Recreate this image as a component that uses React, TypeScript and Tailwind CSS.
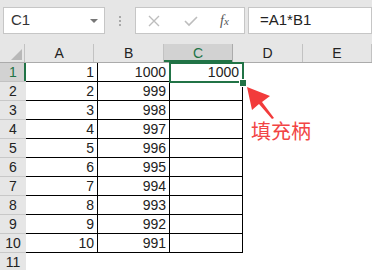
const rows = [
  [1, 1000],
  [2, 999],
  [3, 998],
  [4, 997],
  [5, 996],
  [6, 995],
  [7, 994],
  [8, 993],
  [9, 992],
  [10, 991],
]

const cols = ["A", "B", "C", "D", "E"]

const font = { fontFamily: '"Liberation Sans", Arial, sans-serif' }

const App = () => {
  return (
    <div className="relative w-[372px] h-[270px] overflow-hidden bg-white text-[14px] text-[#222]" style={font}>
      {/* Formula bar */}
      <div className="h-[44px] bg-[#e6e6e6] flex items-start pt-[7px] pl-[3px]">
        <div className="w-[102px] h-[27px] bg-white border border-[#c6c6c6] flex items-center justify-between pl-[7px] pr-[6px]">
          <span className="text-[15px] text-[#333]">C1</span>
          <span className="w-0 h-0 border-l-[4px] border-r-[4px] border-t-[4px] border-l-transparent border-r-transparent border-t-[#777]" />
        </div>
        <div className="w-[30px] h-[27px] flex flex-col items-center justify-center gap-[2px]">
          <span className="size-[2px] bg-[#a8a8a8]" />
          <span className="size-[2px] bg-[#a8a8a8]" />
          <span className="size-[2px] bg-[#a8a8a8]" />
        </div>
        <div className="w-[110px] h-[27px] bg-white border border-[#c6c6c6] flex items-center pl-[12px]">
          <svg width="12" height="12" viewBox="0 0 12 12" className="mr-[24px]">
            <path d="M1 1 L11 11 M11 1 L1 11" stroke="#bdbdbd" strokeWidth="1.4" fill="none" />
          </svg>
          <svg width="14" height="12" viewBox="0 0 14 12" className="mr-[22px]">
            <path d="M1 6 L5 10 L13 2" stroke="#bdbdbd" strokeWidth="1.6" fill="none" />
          </svg>
          <span className="italic text-[14px] text-[#555]" style={{ fontFamily: '"Liberation Serif", serif' }}>
            f<span className="text-[11px]">x</span>
          </span>
        </div>
        <div className="ml-[3px] flex-1 h-[27px] bg-white border border-[#c6c6c6] flex items-center pl-[11px]">
          <span className="text-[15px] text-[#222]">=A1*B1</span>
        </div>
      </div>

      {/* Column headers */}
      <div className="flex h-[19px] bg-[#e6e6e6] border-b border-[#ababab]">
        <div className="w-[26px] h-full relative border-r border-[#c2c2c2]">
          <span className="absolute right-[2px] bottom-[2px] w-0 h-0 border-l-[11px] border-b-[11px] border-l-transparent border-b-[#b8b8b8]" />
        </div>
        {cols.map((c) => (
          <div
            key={c}
            className={
              c === "C"
                ? "w-[72px] h-full flex items-center justify-center bg-[#d2d2d2] text-[#217346] border-r border-[#ababab] shadow-[inset_0_-2px_0_#217346]"
                : "w-[72px] h-full flex items-center justify-center border-r border-[#c2c2c2] text-[#222]"
            }
          >
            {c}
          </div>
        ))}
      </div>

      {/* Data rows */}
      {rows.map(([a, b], i) => (
        <div key={i} className="flex h-[19px]">
          <div
            className={
              i === 0
                ? "w-[26px] h-full flex items-center justify-center bg-[#d2d2d2] text-[#217346] shadow-[inset_-2px_0_0_#217346] border-b border-[#c2c2c2]"
                : "w-[26px] h-full flex items-center justify-center bg-[#e6e6e6] border-b border-[#c8c8c8]"
            }
          >
            {i + 1}
          </div>
          <div className="w-[72px] h-full flex items-center justify-end pr-[3px] border-r border-b border-black">{a}</div>
          <div className="w-[72px] h-full flex items-center justify-end pr-[3px] border-r border-b border-black">{b}</div>
          <div className="w-[73px] h-full flex items-center justify-end pr-[3px] border-r border-b border-black">
            {i === 0 ? 1000 : ""}
          </div>
        </div>
      ))}

      <div className="flex h-[19px]">
        <div className="w-[26px] h-full flex items-center justify-center bg-[#e6e6e6]">11</div>
      </div>

      {/* Active cell C1 with fill handle */}
      <div className="absolute left-[169px] top-[62px] w-[75px] h-[21px] border-2 border-[#217346]" />
      <div className="absolute left-[239px] top-[79px] w-[8px] h-[8px] bg-[#217346] border border-white" />

      {/* Callout arrow */}
      <svg className="absolute left-[240px] top-[80px]" width="50" height="45" viewBox="0 0 50 45">
        <path d="M7 7 L30 16 L22 22 L34 38 L32 39 L19 24 L12 30 Z" fill="#f23b3b" />
      </svg>
      <div
        className="absolute left-[251px] top-[121px] text-[20px] leading-none text-[#f24444]"
        style={{ fontFamily: '"Noto Sans CJK SC", sans-serif' }}
      >
        填充柄
      </div>
    </div>
  )
}

export default App
